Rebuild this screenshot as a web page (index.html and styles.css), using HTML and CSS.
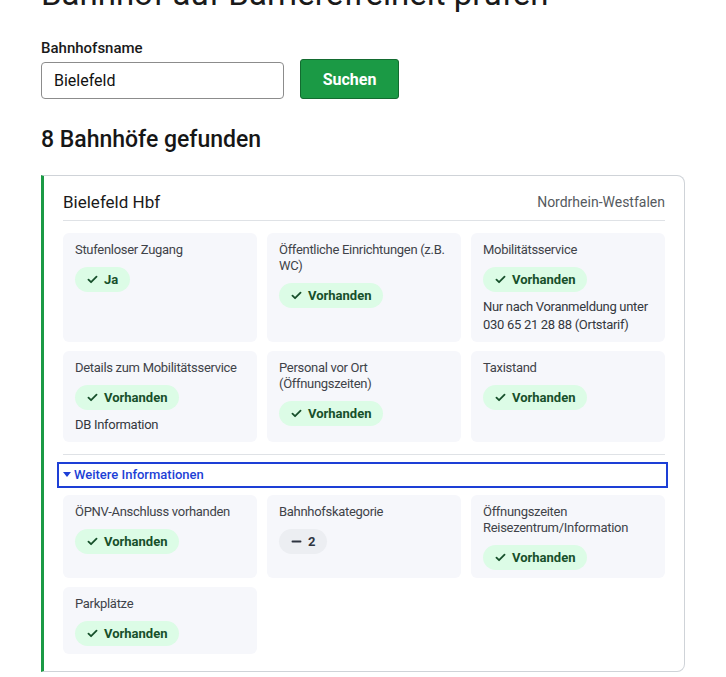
FILE: index.html
```html
<!DOCTYPE html>
<html lang="de">
<head>
<meta charset="utf-8">
<title>Bahnhof auf Barrierefreiheit prüfen</title>
<link rel="stylesheet" href="styles.css">
</head>
<body>
<main class="page">
  <h1 class="title">Bahnhof auf Barrierefreiheit prüfen</h1>
  <form class="search">
    <label class="search-label" for="q">Bahnhofsname</label>
    <div class="search-row">
      <input id="q" class="search-input" type="text" value="Bielefeld">
      <button type="button" class="search-btn">Suchen</button>
    </div>
  </form>
  <h2 class="result-count">8 Bahnhöfe gefunden</h2>
  <section class="station">
    <header class="station-head">
      <span class="station-name">Bielefeld Hbf</span>
      <span class="station-state">Nordrhein-Westfalen</span>
    </header>
    <div class="grid">
      <div class="tile">
        <div class="tile-label">Stufenloser Zugang</div>
        <span class="badge yes"><svg class="ico" viewBox="0 0 12 10"><path d="M1.5 5.2 4.4 8 10.5 1.8"/></svg>Ja</span>
      </div>
      <div class="tile">
        <div class="tile-label">Öffentliche Einrichtungen (z.B. WC)</div>
        <span class="badge yes"><svg class="ico" viewBox="0 0 12 10"><path d="M1.5 5.2 4.4 8 10.5 1.8"/></svg>Vorhanden</span>
      </div>
      <div class="tile">
        <div class="tile-label">Mobilitätsservice</div>
        <span class="badge yes"><svg class="ico" viewBox="0 0 12 10"><path d="M1.5 5.2 4.4 8 10.5 1.8"/></svg>Vorhanden</span>
        <div class="tile-note">Nur nach Voranmeldung unter 030 65 21 28 88 (Ortstarif)</div>
      </div>
      <div class="tile">
        <div class="tile-label">Details zum Mobilitätsservice</div>
        <span class="badge yes"><svg class="ico" viewBox="0 0 12 10"><path d="M1.5 5.2 4.4 8 10.5 1.8"/></svg>Vorhanden</span>
        <div class="tile-note">DB Information</div>
      </div>
      <div class="tile">
        <div class="tile-label">Personal vor Ort (Öffnungszeiten)</div>
        <span class="badge yes"><svg class="ico" viewBox="0 0 12 10"><path d="M1.5 5.2 4.4 8 10.5 1.8"/></svg>Vorhanden</span>
      </div>
      <div class="tile">
        <div class="tile-label">Taxistand</div>
        <span class="badge yes"><svg class="ico" viewBox="0 0 12 10"><path d="M1.5 5.2 4.4 8 10.5 1.8"/></svg>Vorhanden</span>
      </div>
    </div>
    <details class="more" open>
      <summary class="more-toggle">Weitere Informationen</summary>
      <div class="grid">
        <div class="tile">
          <div class="tile-label">ÖPNV-Anschluss vorhanden</div>
          <span class="badge yes"><svg class="ico" viewBox="0 0 12 10"><path d="M1.5 5.2 4.4 8 10.5 1.8"/></svg>Vorhanden</span>
        </div>
        <div class="tile">
          <div class="tile-label">Bahnhofskategorie</div>
          <span class="badge neutral"><svg class="ico" viewBox="0 0 12 10"><path d="M1.5 5 10.5 5"/></svg>2</span>
        </div>
        <div class="tile">
          <div class="tile-label">Öffnungszeiten Reisezentrum/Information</div>
          <span class="badge yes"><svg class="ico" viewBox="0 0 12 10"><path d="M1.5 5.2 4.4 8 10.5 1.8"/></svg>Vorhanden</span>
        </div>
        <div class="tile">
          <div class="tile-label">Parkplätze</div>
          <span class="badge yes"><svg class="ico" viewBox="0 0 12 10"><path d="M1.5 5.2 4.4 8 10.5 1.8"/></svg>Vorhanden</span>
        </div>
      </div>
    </details>
  </section>
</main>
</body>
</html>
```
FILE: styles.css
```css
html, body {
  margin: 0;
  padding: 0;
  background: #ffffff;
  overflow: hidden;
}
body {
  font-family: Roboto, "Noto Sans", "Liberation Sans", sans-serif;
  color: #1a1a1a;
}
.page {
  padding: 0 41px;
}
.title {
  margin: -25px 0 0;
  font-size: 33px;
  line-height: 38px;
  font-weight: 400;
  color: #1a1a1a;
}
.search {
  margin-top: 26px;
  display: flex;
  flex-direction: column;
}
.search-label {
  font-size: 15px;
  line-height: 18px;
  font-weight: 500;
  color: #1a1a1a;
}
.search-row {
  margin-top: 2px;
  display: flex;
  align-items: flex-end;
  gap: 16px;
}
.search-input {
  box-sizing: border-box;
  width: 243px;
  height: 37px;
  padding: 0 12px;
  border: 1px solid #8c8c8c;
  border-radius: 4px;
  font-family: inherit;
  font-size: 16px;
  color: #111;
}
.search-btn {
  box-sizing: border-box;
  width: 99px;
  height: 40px;
  background: #1b9a45;
  border: 1px solid #136b30;
  border-radius: 3px;
  color: #ffffff;
  font-family: inherit;
  font-size: 16px;
  font-weight: 700;
}
.result-count {
  margin: 27px 0 0;
  font-size: 23px;
  line-height: 28px;
  font-weight: 500;
  color: #161616;
}
.station {
  margin-top: 21px;
  border: 1px solid #cfd3d8;
  border-left: 3px solid #1b9a45;
  border-radius: 0 8px 8px 0;
  padding: 0 19px 17px 19px;
}
.station-head {
  display: flex;
  justify-content: space-between;
  align-items: center;
  padding: 14px 0 6px;
  border-bottom: 1px solid #dfe2e6;
}
.station-name {
  font-size: 17px;
  line-height: 24px;
  color: #1a1a1a;
}
.station-state {
  font-size: 14px;
  line-height: 20px;
  color: #555a60;
}
.grid {
  display: grid;
  grid-template-columns: repeat(3, 1fr);
  gap: 9px 10px;
  margin-top: 12px;
}
.tile {
  background: #f6f7fb;
  border-radius: 6px;
  padding: 9px 8px 8px 12px;
  display: flex;
  flex-direction: column;
  align-items: flex-start;
}
.tile-label {
  font-size: 13px;
  line-height: 16px;
  color: #3f4349;
  letter-spacing: -0.3px;
}
.badge {
  margin-top: 9px;
  display: inline-flex;
  align-items: center;
  height: 25px;
  padding: 0 12px 0 12px;
  border-radius: 13px;
  font-size: 13px;
  font-weight: 700;
}
.badge .ico {
  width: 11px;
  height: 9px;
  margin-right: 6px;
  fill: none;
  stroke: currentColor;
  stroke-width: 2;
  stroke-linecap: round;
  stroke-linejoin: round;
}
.badge.yes {
  background: #dcfce6;
  color: #17502b;
}
.badge.neutral {
  background: #eceef2;
  color: #2e3440;
}
.tile-note {
  margin-top: 6px;
  font-size: 13px;
  line-height: 18px;
  color: #34383e;
  letter-spacing: -0.3px;
}
.more {
  margin-top: 12px;
  border-top: 1px solid #dfe2e6;
  padding-top: 9px;
}
.more-toggle {
  margin: 0 -1px 0 -4px;
  padding: 2px 4px;
  outline: 2px solid #1d3fd6;
  font-size: 13px;
  line-height: 18px;
  font-weight: 500;
  color: #1d3fd6;
  cursor: pointer;
  list-style: none;
}
.more-toggle::-webkit-details-marker {
  display: none;
}
.more-toggle::before {
  content: "";
  display: inline-block;
  width: 0;
  height: 0;
  border-left: 4px solid transparent;
  border-right: 4px solid transparent;
  border-top: 5px solid #1d3fd6;
  margin-right: 3px;
  vertical-align: 2px;
}
.more .grid {
  margin-top: 9px;
}
```
